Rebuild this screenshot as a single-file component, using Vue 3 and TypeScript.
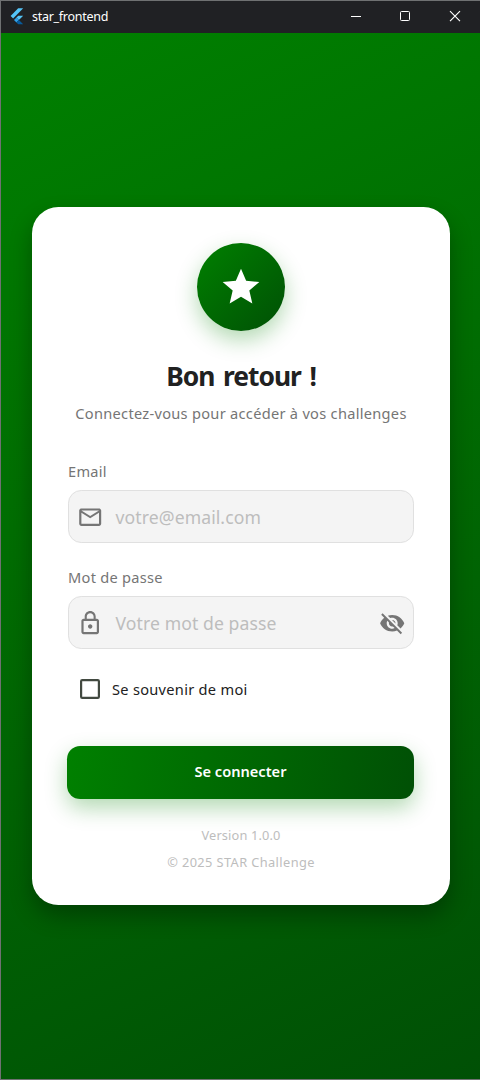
<script setup lang="ts">
import { ref } from 'vue'

interface Field {
  id: string
  label: string
  hint: string
  icon: string
  secret: boolean
}

const fields: Field[] = [
  {
    id: 'email',
    label: 'Email',
    hint: 'votre@email.com',
    icon: 'M22 6c0-1.1-.9-2-2-2H4c-1.1 0-2 .9-2 2v12c0 1.1.9 2 2 2h16c1.1 0 2-.9 2-2V6zm-2 0l-8 5-8-5h16zm0 12H4V8l8 5 8-5v10z',
    secret: false,
  },
  {
    id: 'password',
    label: 'Mot de passe',
    hint: 'Votre mot de passe',
    icon: 'M12 17c1.1 0 2-.9 2-2s-.9-2-2-2-2 .9-2 2 .9 2 2 2zm6-9h-1V6c0-2.76-2.24-5-5-5S7 3.24 7 6v2H6c-1.1 0-2 .9-2 2v10c0 1.1.9 2 2 2h12c1.1 0 2-.9 2-2V10c0-1.1-.9-2-2-2zM8.9 6c0-1.71 1.39-3.1 3.1-3.1s3.1 1.39 3.1 3.1v2H8.9V6zM18 20H6V10h12v10z',
    secret: true,
  },
]

const remember = ref(false)
</script>

<template>
  <div class="window">
    <header class="titlebar">
      <svg class="logo" width="14" height="17" viewBox="0 0 14 17">
        <path d="M8.2 0.3H13.2L3.1 10.4L0.6 7.9z" fill="#54c5f8" />
        <path d="M8.3 7.7H13.2L8.9 12L6.4 9.6z" fill="#54c5f8" />
        <path d="M4 12L6.4 9.6L8.9 12L6.4 14.5z" fill="#2f9fe8" />
        <path d="M6.4 14.5L8.9 12L13.2 16.3H8.3z" fill="#075b9d" />
      </svg>
      <span class="app-name">star_frontend</span>
      <div class="controls">
        <svg width="50" height="32" viewBox="0 0 50 32"><path d="M11 15.5h10" stroke="#fff" fill="none" /></svg>
        <svg width="50" height="32" viewBox="0 0 50 32"><rect x="10.5" y="10.5" width="9" height="9" rx="1" stroke="#fff" fill="none" /></svg>
        <svg width="50" height="32" viewBox="0 0 50 32"><path d="M10 10.2l10 10M20 10.2l-10 10" stroke="#fff" stroke-width="1.15" fill="none" /></svg>
      </div>
    </header>

    <main class="page">
      <section class="card">
        <div class="badge">
          <svg width="44" height="44" viewBox="0 0 24 24">
            <path fill="#fff" d="M12 17.27L18.18 21l-1.64-7.03L22 9.24l-7.19-.61L12 2 9.19 8.63 2 9.24l5.46 4.73L5.82 21z" />
          </svg>
        </div>
        <h1><span>Bon retour !</span></h1>
        <p class="subtitle"><span>Connectez-vous pour accéder à vos challenges</span></p>

        <div v-for="f in fields" :key="f.id" class="field">
          <div class="label"><span>{{ f.label }}</span></div>
          <div class="box">
            <svg class="lead" width="26.4" height="26.4" viewBox="0 0 24 24"><path :d="f.icon" fill="#757575" /></svg>
            <span class="hint">{{ f.hint }}</span>
            <svg v-if="f.secret" class="trail" width="26.4" height="26.4" viewBox="0 0 24 24">
              <path
                fill="#757575"
                d="M12 7c2.76 0 5 2.24 5 5 0 .65-.13 1.26-.36 1.83l2.92 2.92c1.51-1.26 2.7-2.89 3.43-4.75-1.73-4.39-6-7.5-11-7.5-1.4 0-2.74.25-3.98.7l2.16 2.16C10.74 7.13 11.35 7 12 7zM2 4.27l2.28 2.28.46.46C3.08 8.3 1.78 10.02 1 12c1.73 4.39 6 7.5 11 7.5 1.55 0 3.03-.3 4.38-.84l.42.42L19.73 22 21 20.73 3.27 3 2 4.27zM7.53 9.8l1.55 1.55c-.05.21-.08.43-.08.65 0 1.66 1.34 3 3 3 .22 0 .44-.03.65-.08l1.55 1.55c-.67.33-1.41.53-2.2.53-2.76 0-5-2.24-5-5 0-.79.2-1.53.53-2.2zm4.31-.78l3.15 3.15.02-.16c0-1.66-1.34-3-3-3l-.17.01z"
              />
            </svg>
          </div>
        </div>

        <div class="remember" @click="remember = !remember">
          <svg width="20" height="20" viewBox="0 0 20 20">
            <rect x="1.1" y="1.1" width="17.8" height="17.8" rx="1.1" fill="none" stroke="#424940" stroke-width="2.2" />
            <path v-if="remember" d="M4.5 10l4 4 7-8" fill="none" stroke="#008000" stroke-width="2.2" />
          </svg>
          <span>Se souvenir de moi</span>
        </div>

        <button class="submit" type="button"><span>Se connecter</span></button>

        <p class="foot version"><span>Version 1.0.0</span></p>
        <p class="foot copyright"><span>© 2025 STAR Challenge</span></p>
      </section>
    </main>
  </div>
</template>

<style>
body {
  margin: 0;
}
</style>

<style scoped>
.window {
  box-sizing: border-box;
  width: 480px;
  height: 1080px;
  display: flex;
  flex-direction: column;
  border: 1px solid #6f7172;
  border-right: 0;
  overflow: hidden;
  font-family: 'Noto Sans', 'Open Sans', sans-serif;
  white-space: nowrap;
}
svg {
  display: block;
  flex: none;
}
h1,
p {
  margin: 0;
}
.titlebar {
  height: 32px;
  flex: none;
  display: flex;
  align-items: center;
  background: #202124;
  color: #fff;
}
.logo {
  margin: -2px 0 0 9px;
}
.app-name {
  margin-left: 8px;
  font-size: 12.5px;
  line-height: 30px;
  letter-spacing: -0.28px;
}
.controls {
  margin-left: auto;
  display: flex;
  margin-right: -10px;
}
.page {
  flex: 1;
  box-sizing: border-box;
  padding: 174px 0 0 31px;
  background: linear-gradient(155.4deg, #008000, #005005);
}
.card {
  box-sizing: border-box;
  width: 418px;
  height: 698px;
  padding: 36px 36px 0;
  border: 0.5px solid #8cbf8c;
  border-radius: 26.4px;
  background: #fff;
  background-clip: border-box;
  border-width: 0;
  box-shadow: 0 11px 22px rgba(0, 0, 0, 0.3);
  display: flex;
  flex-direction: column;
}
.badge {
  align-self: center;
  width: 88px;
  height: 88px;
  border-radius: 50%;
  background: linear-gradient(135deg, #008000, #005005);
  box-shadow: 0 9px 22px rgba(0, 128, 0, 0.3);
  display: flex;
  align-items: center;
  justify-content: center;
}
h1 {
  margin-top: 26px;
  height: 38px;
  line-height: 38px;
  text-align: center;
  font-size: 26.4px;
  font-weight: 700;
  letter-spacing: -1px;
  word-spacing: 2.7px;
  color: #212121;
}
.subtitle {
  margin-top: 8px;
  height: 20px;
  line-height: 20px;
  text-align: center;
  font-size: 14.6px;
  letter-spacing: 0.29px;
  color: #757575;
}
.field {
  margin-bottom: 24px;
}
.subtitle + .field {
  margin-top: 38px;
}
.label {
  height: 20px;
  line-height: 20px;
  margin-bottom: 9px;
  font-size: 14.6px;
  letter-spacing: 0.28px;
  color: #757575;
}
.box {
  box-sizing: border-box;
  height: 53px;
  display: flex;
  align-items: center;
  padding: 0 8px 0 7.8px;
  border: 1px solid #e0e0e0;
  border-radius: 13.2px;
  background: #f4f4f4;
}
.lead,
.trail {
  margin-top: 0.8px;
}
.hint {
  margin-left: 12.4px;
  font-size: 17.6px;
  line-height: 24px;
  letter-spacing: 0.08px;
  color: #bdbdbd;
}
.trail {
  margin-left: auto;
}
.remember {
  margin: 6px 0 0 12px;
  height: 20px;
  display: flex;
  align-items: center;
  font-size: 14.6px;
  letter-spacing: 0.29px;
  color: #212121;
}
.remember span {
  margin-left: 12px;
}
.submit {
  margin-top: 47px;
  margin-left: -1px;
  height: 53px;
  flex: none;
  padding: 0;
  border: 0;
  border-radius: 13.2px;
  background: linear-gradient(98.7deg, #008000, #005005);
  box-shadow: 0 9px 22px rgba(0, 128, 0, 0.3);
  font: 600 14.6px 'Noto Sans', 'Open Sans', sans-serif;
  color: #fff;
}
.submit span {
  display: block;
  height: 53px;
  line-height: 51px;
}
.foot {
  height: 20px;
  line-height: 20px;
  text-align: center;
  font-size: 12.8px;
  color: #bdbdbd;
}
.version {
  margin-top: 26px;
  letter-spacing: 0.15px;
}
.copyright {
  margin-top: 7px;
  letter-spacing: 0.4px;
}
</style>
